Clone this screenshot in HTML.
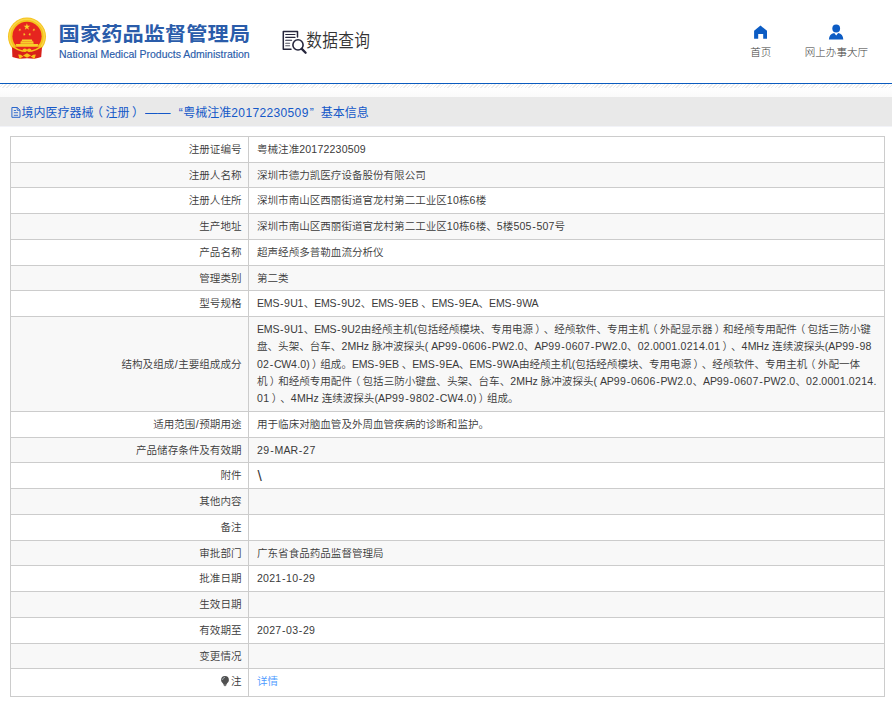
<!DOCTYPE html>
<html lang="zh-CN"><head><meta charset="utf-8"><title>数据查询</title>
<style>
html,body{margin:0;padding:0;background:#fff;}
body{width:892px;height:704px;position:relative;overflow:hidden;font-family:"Liberation Sans","Noto Sans CJK SC",sans-serif;color:#3a3a3a;}
.hdr{position:absolute;left:0;top:0;width:892px;height:83px;background:#fff;}
.emblem{position:absolute;left:0;top:10px;}
.t1{position:absolute;left:58.6px;top:22.1px;font-size:21.2px;font-weight:bold;color:#2a5caa;line-height:28px;white-space:nowrap;letter-spacing:.1px;transform:scaleY(.92);transform-origin:0 0;}
.t2{position:absolute;left:58.6px;top:47.2px;font-size:10.75px;color:#2a5caa;line-height:14px;white-space:nowrap;transform:scaleX(.976);transform-origin:0 0;-webkit-text-stroke:.15px #2a5caa;}
.sicon{position:absolute;left:278px;top:26px;}
.stxt{position:absolute;left:306.2px;top:28.2px;font-size:15.7px;line-height:22px;color:#333;white-space:nowrap;transform:scaleY(1.18);font-weight:350;letter-spacing:.35px;transform-origin:0 0;}
.nav{position:absolute;text-align:center;font-size:10.55px;line-height:14px;color:#3a3a3a;white-space:nowrap;font-weight:300;}
.hicon{position:absolute;left:750px;top:22px;}.uicon{position:absolute;left:824px;top:22px;}
.blue{position:absolute;left:0;top:83px;width:892px;height:1.5px;background:#0b5cbf;}
.hatch{position:absolute;left:0;top:84px;width:892px;height:4px;background:repeating-linear-gradient(135deg,#fff 0,#fff 1.6px,#ececec 1.6px,#ececec 2.6px);}
.fade{position:absolute;left:0;top:88px;width:892px;height:9px;background:linear-gradient(#fff,#fafafa);}
.bar{position:absolute;left:0;top:97px;width:892px;height:29px;background:#e9e9e9;}
.bar .ti{position:absolute;left:10px;top:8px;}
.bar .tt{position:absolute;left:0;top:7.3px;font-size:12px;line-height:18px;color:#1458c8;white-space:nowrap;}
.tt .s{position:absolute;top:0;}
.pl{position:relative;left:-2.5px;}
.pr{position:relative;left:2.5px;}
i.d2{letter-spacing:.36px;}
.tbl{position:absolute;left:10px;top:136px;width:875px;height:561px;font-size:10.55px;font-weight:350;}
.row{position:absolute;left:0;width:875px;border-top:1px solid #ccc;box-sizing:border-box;background:#fff;}
.row.odd{background:#f8f8f8;}
.lab{position:absolute;left:1px;top:0;width:230.5px;text-align:right;white-space:nowrap;}
.val{position:absolute;left:247px;top:0;white-space:nowrap;}
.long{padding-top:4.3px;}
.ln{line-height:17.14px;height:17.14px;white-space:nowrap;}
.lnk{color:#4c9aff;}
.vsep{position:absolute;left:238px;top:0;width:1px;height:561px;background:#ccc;}
.bl{position:absolute;left:0;top:0;width:1px;height:561px;background:#ccc;}
.br{position:absolute;left:874px;top:0;width:1px;height:561px;background:#ccc;}
.bb{position:absolute;left:0;top:560px;width:875px;height:1px;background:#ccc;}
.bulb{vertical-align:-1.6px;margin-right:2.1px;}
.tbl{text-spacing-trim:space-all;}
i{font-style:normal;}
i.d{letter-spacing:calc(.2px + var(--x,0px));}
i.h{margin:0 calc(.65px + var(--x,0px)/2);}
i.u{letter-spacing:calc(-.2px + var(--x,0px));}
b{font-weight:inherit;}
.tbl .pl{left:-2.2px;}
.tbl .pr{left:2.2px;}
i.sl{margin:0 .5px;}
.bar:after{content:'';position:absolute;left:0;top:29px;width:892px;height:1px;background:#f2f3f8;}
.dash{display:inline-block;transform:scaleX(1.06);transform-origin:0 0;}
.bs{font-size:15.5px;line-height:1;position:relative;top:2px;left:.5px;}
</style></head>
<body>
<div class="hdr">
<svg class="emblem" width="60" height="60" viewBox="0 10 60 60"><circle cx="27" cy="36.600" r="19" fill="#f6c21c"/><circle cx="27" cy="36.600" r="17.300" fill="none" stroke="#f9d648" stroke-width="1.4"/><path d="M12 47.300L42 47.300L41.200 57Q38 58.300 34.300 58.700L27 58.200L19.700 58.700Q16 58.300 12.400 57Z" fill="#d8201a"/><circle cx="27" cy="36.300" r="14.600" fill="#e6251f"/><path d="M15 46.800L39 46.800L33 51.500L21 51.500Z" fill="#e6251f"/><polygon points="26.90,23.30 27.69,25.72 30.23,25.72 28.17,27.21 28.96,29.63 26.90,28.14 24.84,29.63 25.63,27.21 23.57,25.72 26.11,25.72" fill="#f8d12a"/><polygon points="20.60,28.41 20.36,29.55 21.37,30.13 20.21,30.25 19.97,31.39 19.49,30.33 18.34,30.45 19.20,29.67 18.73,28.61 19.74,29.19" fill="#f8d12a"/><polygon points="33.10,28.41 33.96,29.19 34.97,28.61 34.50,29.67 35.36,30.45 34.21,30.33 33.73,31.39 33.49,30.25 32.33,30.13 33.34,29.55" fill="#f8d12a"/><polygon points="24.58,32.72 24.74,33.88 25.88,34.08 24.84,34.59 25.00,35.74 24.19,34.90 23.15,35.41 23.69,34.39 22.89,33.55 24.03,33.75" fill="#f8d12a"/><polygon points="29.42,32.72 29.97,33.75 31.11,33.55 30.31,34.39 30.85,35.41 29.81,34.90 29.00,35.74 29.16,34.59 28.12,34.08 29.26,33.88" fill="#f8d12a"/><path d="M22.2 39.400h9.600l.6 1.700h-10.800z" fill="#f8d12a"/><path d="M20.8 41.300h12.400l.5 2.500h-13.400z" fill="#f8cf2a"/><path d="M15.800 44.100h22.400l-.6 2.600h-21.200z" fill="#f8d12a"/><path d="M12.800 46.600Q17.500 50 23 51.300M41.200 46.600Q36.500 50 31 51.300" fill="none" stroke="#f6c21c" stroke-width="1.5"/><path d="M22.400 50.600q.4-2.300 2.600-2.100q1.400.2 2 1.300q.6-1.100 2-1.300q2.200-.2 2.600 2.100q-.4 1.600-2.400 1.500q-1.400-.2-2.200-1.300q-.8 1.100-2.200 1.300q-2 .1-2.400-1.500z" fill="#f6c21c"/><path d="M23 55.500L27 53.300L31 55.500L27 57.700Z" fill="#f6c21c"/><path d="M18.200 54.500l2.600.3l2.700 2l-1.800.4l-1.200 1.500l-1.200-.2z M35.800 54.500l-2.600.3l-2.700 2l1.800.4l1.200 1.500l1.200-.2z" fill="#f6c21c"/></svg>
<div class="t1">国家药品监督管理局</div>
<div class="t2">National Medical Products Administration</div>
<svg class="sicon" width="32" height="32" viewBox="278 26 32 32"><path d="M297.500 37V31.600H283.300V49.200H291" fill="none" stroke="#26263c" stroke-width="1.5" stroke-linejoin="round" stroke-linecap="round"/><path d="M285.700 34.500H295M285.700 37.400H295M285.700 40.300H291.600" stroke="#26263c" stroke-width="1.100" stroke-linecap="round"/><path d="M285.700 43.200H289.600M285.700 45.800H289.600" stroke="#555566" stroke-width="1.100" stroke-linecap="round"/><circle cx="298" cy="44.900" r="5.100" fill="#fff" stroke="#26263c" stroke-width="1.600"/><path d="M301.800 48.900L305.600 52.700" stroke="#26263c" stroke-width="2.300" stroke-linecap="round"/></svg>
<div class="stxt">数据查询</div>
<svg class="hicon" width="20" height="20" viewBox="750 22 20 20"><path d="M760.500 25.600L767 30.800V38.800H763.200V33.900H758.200V38.800H754.100V30.800Z" fill="#0c5cc4"/></svg><div class="nav" style="left:740px;top:45px;width:41.500px">首页</div>
<svg class="uicon" width="24" height="20" viewBox="824 22 24 20"><circle cx="836.200" cy="28.500" r="3.900" fill="#0c5cc4"/><path d="M828.900 39.400Q829.200 33.600 834.200 32.900L836.200 35.600L838.200 32.900Q843 33.600 843.300 39.400Z" fill="#0c5cc4"/></svg><div class="nav" style="left:796px;top:45px;width:80.800px">网上办事大厅</div>
</div>
<div class="blue"></div><div class="hatch"></div><div class="fade"></div>
<div class="bar"><svg class="ti" width="12" height="14" viewBox="10 105 12 14"><path d="M11.900 107.500H17.300L20 110.200V117.300H11.900Z" fill="none" stroke="#2a66cc" stroke-width="1" stroke-linejoin="round"/><path d="M17.200 107.600V110.300H19.900" fill="none" stroke="#2a66cc" stroke-width=".9"/><path d="M13.800 110.500H16M13.800 112.700H18M13.800 115.300H18" stroke="#2a66cc" stroke-width=".9"/></svg><div class="tt"><span class="s" style="left:21.500px">境内医疗器械<span class="pl">（</span>注册<span class="pr">）</span></span><span class="s dash" style="left:145.300px">——</span><span class="s" style="left:178.800px">“</span><span class="s" style="left:183.300px">粤械注准<i class="d2">20172230509</i></span><span class="s" style="left:309.800px">”</span><span class="s" style="left:320.800px">基本信息</span></div></div>
<div class="tbl">
<div class="row" style="top:0px;height:26px"><div class="lab" style="line-height:25px">注册证编号</div><div class="val" style="line-height:25px">粤械注准<i class="d">20172230509</i></div></div>
<div class="row odd" style="top:26px;height:25px"><div class="lab" style="line-height:24px">注册人名称</div><div class="val" style="line-height:24px">深圳市德力凯医疗设备股份有限公司</div></div>
<div class="row" style="top:51px;height:26px"><div class="lab" style="line-height:25px">注册人住所</div><div class="val" style="line-height:25px">深圳市南山区西丽街道官龙村第二工业区<i class="d">10</i>栋<i class="d">6</i>楼</div></div>
<div class="row odd" style="top:77px;height:26px"><div class="lab" style="line-height:25px">生产地址</div><div class="val" style="line-height:25px">深圳市南山区西丽街道官龙村第二工业区<i class="d">10</i>栋<i class="d">6</i>楼、<i class="d">5</i>楼<i class="d">505</i><i class="h">-</i><i class="d">507</i>号</div></div>
<div class="row" style="top:103px;height:26px"><div class="lab" style="line-height:25px">产品名称</div><div class="val" style="line-height:25px">超声经颅多普勒血流分析仪</div></div>
<div class="row odd" style="top:129px;height:25px"><div class="lab" style="line-height:24px">管理类别</div><div class="val" style="line-height:24px">第二类</div></div>
<div class="row" style="top:154px;height:26px"><div class="lab" style="line-height:25px">型号规格</div><div class="val" style="line-height:25px"><i class="u">EMS</i><i class="h">-</i><i class="d">9</i><i class="u">U</i><i class="d">1</i>、<i class="u">EMS</i><i class="h">-</i><i class="d">9</i><i class="u">U</i><i class="d">2</i>、<i class="u">EMS</i><i class="h">-</i><i class="d">9</i><i class="u">EB</i> 、<i class="u">EMS</i><i class="h">-</i><i class="d">9</i><i class="u">EA</i>、<i class="u">EMS</i><i class="h">-</i><i class="d">9</i><i class="u">WA</i></div></div>
<div class="row odd" style="top:180px;height:95px"><div class="lab" style="line-height:94px">结构及组成<i class="sl">/</i>主要组成成分</div><div class="val"><div class="long"><div class="ln" style="--x:0px"><i class="u">EMS</i><i class="h">-</i><i class="d">9</i><i class="u">U</i><i class="d">1</i>、<i class="u">EMS</i><i class="h">-</i><i class="d">9</i><i class="u">U</i><i class="d">2</i>由经颅主机(包括经颅模块、专用电源<b class="pr">）</b>、经颅软件、专用主机<b class="pl">（</b>外配显示器<b class="pr">）</b>和经颅专用配件<b class="pl">（</b>包括三防小键</div><div class="ln" style="--x:0.094px">盘、头架、台车、<i class="d">2</i><i class="u">MH</i>z 脉冲波探头( <i class="u">AP</i><i class="d">99</i><i class="h">-</i><i class="d">0606</i><i class="h">-</i><i class="u">PW</i><i class="d">2</i>.<i class="d">0</i>、<i class="u">AP</i><i class="d">99</i><i class="h">-</i><i class="d">0607</i><i class="h">-</i><i class="u">PW</i><i class="d">2</i>.<i class="d">0</i>、<i class="d">02</i>.<i class="d">0001</i>.<i class="d">0214</i>.<i class="d">01</i><b class="pr">）</b>、<i class="d">4</i><i class="u">MH</i>z 连续波探头(<i class="u">AP</i><i class="d">99</i><i class="h">-</i><i class="d">98</i></div><div class="ln" style="--x:0px"><i class="d">02</i><i class="h">-</i><i class="u">CW</i><i class="d">4</i>.<i class="d">0</i>)<b class="pr">）</b>组成。<i class="u">EMS</i><i class="h">-</i><i class="d">9</i><i class="u">EB</i> 、<i class="u">EMS</i><i class="h">-</i><i class="d">9</i><i class="u">EA</i>、<i class="u">EMS</i><i class="h">-</i><i class="d">9</i><i class="u">WA</i>由经颅主机(包括经颅模块、专用电源<b class="pr">）</b>、经颅软件、专用主机<b class="pl">（</b>外配一体</div><div class="ln" style="--x:0.08px">机<b class="pr">）</b>和经颅专用配件<b class="pl">（</b>包括三防小键盘、头架、台车、<i class="d">2</i><i class="u">MH</i>z 脉冲波探头( <i class="u">AP</i><i class="d">99</i><i class="h">-</i><i class="d">0606</i><i class="h">-</i><i class="u">PW</i><i class="d">2</i>.<i class="d">0</i>、<i class="u">AP</i><i class="d">99</i><i class="h">-</i><i class="d">0607</i><i class="h">-</i><i class="u">PW</i><i class="d">2</i>.<i class="d">0</i>、<i class="d">02</i>.<i class="d">0001</i>.<i class="d">0214</i>.</div><div class="ln" style="--x:0.22px"><i class="d">01</i><b class="pr">）</b>、<i class="d">4</i><i class="u">MH</i>z 连续波探头(<i class="u">AP</i><i class="d">99</i><i class="h">-</i><i class="d">9802</i><i class="h">-</i><i class="u">CW</i><i class="d">4</i>.<i class="d">0</i>)<b class="pr">）</b>组成。</div></div></div></div>
<div class="row" style="top:275px;height:26px"><div class="lab" style="line-height:25px">适用范围<i class="sl">/</i>预期用途</div><div class="val" style="line-height:25px">用于临床对脑血管及外周血管疾病的诊断和监护。</div></div>
<div class="row odd" style="top:301px;height:25px"><div class="lab" style="line-height:24px">产品储存条件及有效期</div><div class="val" style="line-height:24px"><span style='--x:.22px'><i class="d">29</i><i class="h">-</i><i class="u">MAR</i><i class="h">-</i><i class="d">27</i></span></div></div>
<div class="row" style="top:326px;height:26px"><div class="lab" style="line-height:25px">附件</div><div class="val" style="line-height:25px"><span class='bs'>\</span></div></div>
<div class="row odd" style="top:352px;height:26px"><div class="lab" style="line-height:25px">其他内容</div><div class="val" style="line-height:25px"></div></div>
<div class="row" style="top:378px;height:26px"><div class="lab" style="line-height:25px">备注</div><div class="val" style="line-height:25px"></div></div>
<div class="row odd" style="top:404px;height:25px"><div class="lab" style="line-height:24px">审批部门</div><div class="val" style="line-height:24px">广东省食品药品监督管理局</div></div>
<div class="row" style="top:429px;height:26px"><div class="lab" style="line-height:25px">批准日期</div><div class="val" style="line-height:25px"><i class="d">2021</i><i class="h">-</i><i class="d">10</i><i class="h">-</i><i class="d">29</i></div></div>
<div class="row odd" style="top:455px;height:26px"><div class="lab" style="line-height:25px">生效日期</div><div class="val" style="line-height:25px"></div></div>
<div class="row" style="top:481px;height:26px"><div class="lab" style="line-height:25px">有效期至</div><div class="val" style="line-height:25px"><i class="d">2027</i><i class="h">-</i><i class="d">03</i><i class="h">-</i><i class="d">29</i></div></div>
<div class="row odd" style="top:507px;height:25px"><div class="lab" style="line-height:24px">变更情况</div><div class="val" style="line-height:24px"></div></div>
<div class="row" style="top:532px;height:28px"><div class="lab" style="line-height:25.4px"><svg class="bulb" viewBox="0 0 8 10.400" width="8" height="10.400"><path d="M2.700 7.200h2.600v2.200q0 .8-1.300.8t-1.300-.8z" fill="#7a7a7a"/><path d="M4 .1a3.900 3.900 0 0 1 3.900 3.900c0 1.700-1 2.600-1.900 3.600l-.5.800h-3l-.5-.8C1.100 6.600.1 5.700.1 4A3.900 3.900 0 0 1 4 .1z" fill="#505050"/><path d="M1.500 3.600A2.500 2.500 0 0 1 3.600 1.400" fill="none" stroke="#b8c4cc" stroke-width=".8" stroke-linecap="round"/></svg>注</div><div class="val" style="line-height:25.4px"><span class='lnk'>详情</span></div></div>
<div class="vsep"></div><div class="bl"></div><div class="br"></div><div class="bb"></div>
</div>
</body></html>
